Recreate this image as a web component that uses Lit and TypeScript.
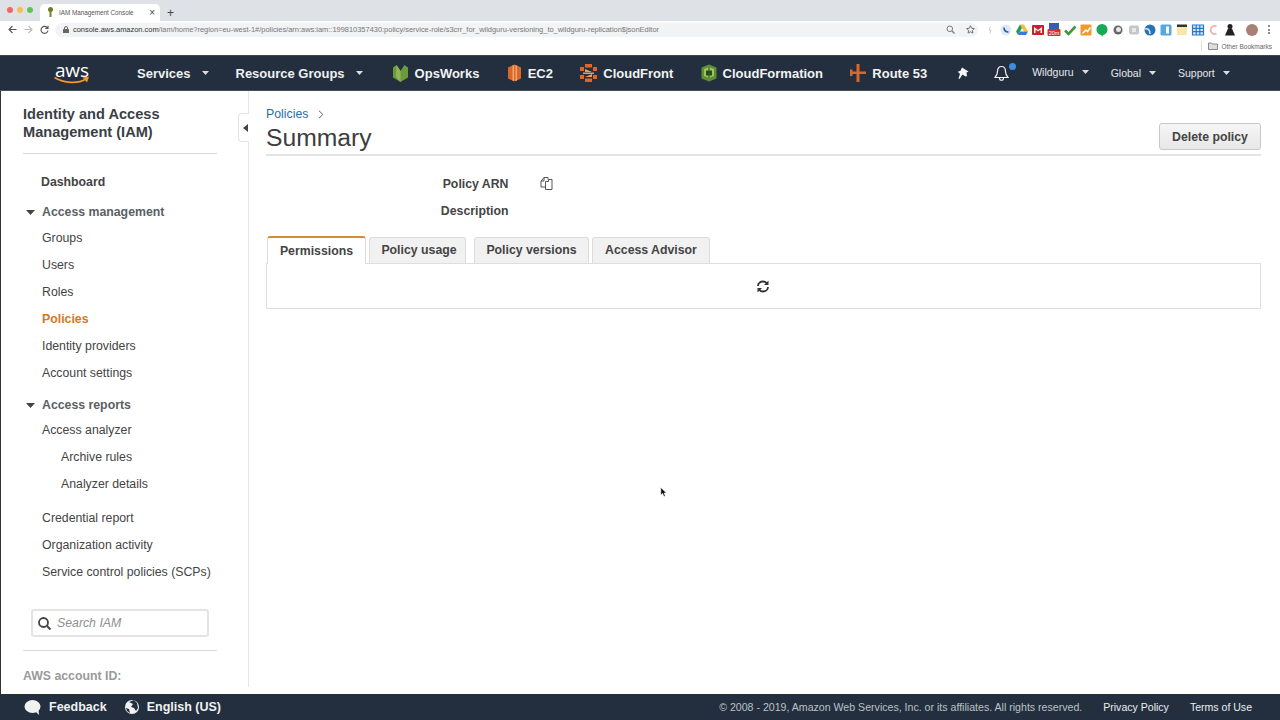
import { LitElement, html, css, svg } from "lit";
import { customElement } from "lit/decorators.js";

const caret = html`<svg class="caret" width="7" height="4" viewBox="0 0 8 5" preserveAspectRatio="none"><path d="M0 0h8L4 5z" fill="currentColor"/></svg>`;

const extIcons = [
  svg`<path d="M8.500 4.500L7 8h2l-1 3.500" stroke="#c9ccd0" fill="none"/>`,
  svg`<circle cx="8" cy="8" r="5.500" fill="#dfe9f5"/><path d="M6 5.500c0 3 1.500 4.500 4.500 4.500" stroke="#2a5aa8" stroke-width="1.600" fill="none"/>`,
  svg`<path d="M6 2.500h4l4 7H10z" fill="#f5bf2f"/><path d="M6 2.500L2 9.500l2 3.500 4-7z" fill="#1f9d57"/><path d="M4 13h8l2-3.500H6z" fill="#3b78e7"/>`,
  svg`<rect x="2" y="3" width="12" height="10" rx="1" fill="#c8232c"/><path d="M4 5v6h1.500V7.500L8 9.500l2.500-2V11H12V5L8 8z" fill="#fff"/>`,
  svg`<rect x="3" y="1" width="10" height="6" fill="#3b5ea8"/><rect x="1.500" y="7" width="13" height="7" rx="1" fill="#d2332d"/><text x="8" y="12.500" font-size="5.500" font-family="Liberation Sans" text-anchor="middle" fill="#fff">20m</text>`,
  svg`<path d="M3 8.500l3.500 3.500L13.500 4.500" stroke="#3d9a3a" stroke-width="2.600" fill="none"/>`,
  svg`<rect x="2.500" y="2.500" width="11" height="11" rx="1" fill="#ef9a2d"/><path d="M4.500 11.500L8 8l1.500 1.500 3-4" stroke="#fff" stroke-width="1.500" fill="none"/>`,
  svg`<circle cx="8" cy="7.500" r="5.500" fill="#17a85a"/><path d="M7 12l1 3 1.500-3z" fill="#17a85a"/>`,
  svg`<circle cx="8" cy="8" r="4.500" fill="#666"/><circle cx="8.500" cy="7.500" r="2.500" fill="#e6e6e6"/>`,
  svg`<rect x="3" y="3.500" width="10" height="9" rx="2" fill="#c4c6c8"/><rect x="6" y="6" width="4" height="4" fill="#e6e7e8"/>`,
  svg`<circle cx="8" cy="8" r="5.500" fill="#2673b8"/><path d="M3 7c3-1 5 1 5 5" stroke="#d4e4f2" stroke-width="1.500" fill="none"/>`,
  svg`<rect x="2.500" y="2.500" width="11" height="11" rx="1.500" fill="#55a9de"/><rect x="8" y="4.500" width="3" height="7" fill="#fff"/>`,
  svg`<rect x="3" y="5" width="10" height="8" fill="#f8e7a8"/><rect x="3" y="2.500" width="10" height="2.500" fill="#333"/>`,
  svg`<path d="M2.500 3h11v10h-11zM2.500 6.300h11M2.500 9.700h11M6.200 3v10M9.800 3v10" stroke="#2678d0" stroke-width="1.200" fill="#d5e6f7"/>`,
  svg`<path d="M10.500 4.500a4 4 0 1 0 0 7" stroke="#eeb0ae" stroke-width="1.800" fill="none"/>`,
  svg`<circle cx="8" cy="4.500" r="2.500" fill="#222"/><path d="M3 13.500l3-7h4l3 7z" fill="#222"/>`,
];

const services = [
  { name: "OpsWorks", w: 17, icon: svg`<path d="M4.500 1L8.500 7l4-6 3.500 2.500v10L8.500 18 1 13.500v-10z" fill="#6c9a3a"/><path d="M4.500 1L8.500 7v11L4 13z" fill="#8fb558"/>` },
  { name: "EC2", w: 15, icon: svg`<path d="M1 3.500L7.500 .5l6.500 3v11l-6.500 3-6.500-3z" fill="#d9692a"/><path d="M5.500 1.300h1.500v15.400H5.500zM8.500 1.200H10v15.600H8.500z" fill="#f3a46b"/>` },
  { name: "CloudFront", w: 17, icon: svg`<path d="M5 0h7v3.500H5zM0 3h4v4H0zM13 3h4v4h-4zM0 11h4v4H0zM13 11h4v4h-4zM5 14.500h7V18H5z" fill="#d9692a"/><path d="M3 8.500h11v1.500H3zM5 5l7 3H5zM5 13l7-3v3z" fill="#f09a5b"/>` },
  { name: "CloudFormation", w: 16, icon: svg`<path d="M8 .5l7.500 3v11L8 17.500.5 14.500v-11z" fill="#5e8e32"/><path d="M3 5l4-1.500v10L3 12zM13 5L9 3.500v10l4-1.500z" fill="#9cc568"/><path d="M5 6.500h6v5H5z" fill="#2d4a1a"/>` },
  { name: "Route 53", w: 16, icon: svg`<path d="M6.500 0h3v18h-3zM0 5.500h2.500v2h4v2.500h-4v2H0zM9.500 7.500H16V10H9.500z" fill="#d9692a"/>` },
];

@customElement("app-root")
export class AppRoot extends LitElement {
  static styles = css`
    :host { display: block; width: 1280px; height: 720px; position: relative; overflow: hidden; background: #fff;
      font-family: "Liberation Sans", Arial, sans-serif; color: #444; }
    * { box-sizing: border-box; }
    svg { display: block; flex: none; }
    .page { display: flex; flex-direction: column; height: 720px; }

    .tabstrip { height: 21px; background: #dee1e6; display: flex; align-items: flex-end; padding-left: 7px; flex: none; }
    .lights { display: flex; gap: 4px; align-self: center; margin-right: 6px; margin-top: -1px; }
    .lights i { width: 6px; height: 6px; border-radius: 50%; display: block; }
    .r { background: #ed6a5e; } .y { background: #f5bf4f; } .g { background: #61c554; }
    .tab { width: 120px; height: 17px; background: #fff; border-radius: 5px 5px 0 0; display: flex; align-items: center;
      padding: 0 5px 1px 7px; font-size: 6.300px; color: #555; gap: 5px; margin-left: 1px; }
    .tab span { flex: 1; }
    .tab b { font-weight: 400; font-size: 10px; color: #444; }
    .plus { font-size: 12px; color: #444; margin-left: 7px; align-self: center; line-height: 1; margin-top: 4px; }

    .toolbar { height: 17px; background: #fff; display: flex; align-items: center; padding: 0 3px 0 4px; flex: none; color: #666; }
    .navbtn { width: 16px; display: flex; justify-content: center; }
    .url { width: 923px; height: 14px; border-radius: 7px; background: #f1f3f4; margin-left: 3px; display: flex; align-items: center;
      padding: 0 3px 0 8px; font-size: 7.450px; color: #777; white-space: nowrap; gap: 4px; }
    .url span { flex: 1; }
    .url b { color: #333; font-weight: 400; }
    .star { margin-left: 7px; }
    .exts { display: flex; margin-left: 4px; align-items: center; }
    .exts div { width: 16px; height: 16px; }
    .avatar { width: 12px; height: 12px; border-radius: 50%; background: #a98076; margin-left: 8px; margin-right: 10px; }
    .dots { display: flex; flex-direction: column; gap: 1.500px; }
    .dots i { width: 2px; height: 2px; border-radius: 50%; background: #666; display: block; }

    .bookmarks { height: 17px; background: #fff; display: flex; justify-content: flex-end; align-items: center; padding: 0 8px 1px 0; font-size: 6.500px; color: #666; gap: 3px; flex: none; }
    .sep { width: 1px; height: 10px; background: #dcdcdc; margin-right: 3px; }

    .nav { height: 36px; background: #232f3e; border-top: 1px solid #3c4652; border-bottom: 1px solid #444f5c; display: flex; align-items: center; padding-left: 54px; color: #fff; flex: none; }
    .logo { width: 83px; flex: none; display: flex; justify-content: flex-start; }
    .logotext { position: relative; width: 36px; height: 25px; }
    .logotext span { position: absolute; left: 1px; top: -4px; font-size: 19px; letter-spacing: -.2px; font-family: "Open Sans", sans-serif; font-weight: 400; }
    .logotext svg { position: absolute; left: 0; top: 15px; }
    .navitem { font-size: 13px; font-weight: 700; display: flex; align-items: center; color: #eef0f2; white-space: nowrap; }
    .navitem .caret { margin-left: 11px; color: #ddd; }
    .svc1 { margin-right: 27px; }
    .svc2 { margin-right: 29px; }
    .svcs { display: flex; gap: 27.300px; align-items: center; }
    .svc { display: flex; align-items: center; gap: 6px; font-size: 13px; font-weight: 700; color: #f2f3f4; white-space: nowrap; }
    .pin { margin-left: 30px; }
    .bell { margin-left: 25px; position: relative; }
    .bell i { position: absolute; left: 15px; top: -2px; width: 7px; height: 7px; border-radius: 50%; background: #3b8fe0; display: block; }
    .acct { font-size: 10.500px; font-weight: 400; color: #e6e8ea; margin-left: 22px; }
    .acct .caret { margin-left: 8px; }
    .a1 { margin-bottom: 2px; margin-left: 23px; }

    .body { flex: 1; display: flex; min-height: 0; border-left: 1px solid #333; }
    .side { width: 248px; flex: none; border-right: 1px solid #e6e6e6; padding: 14px 31px 0 22px; overflow: hidden; margin-bottom: 7px; }
    .side h1 { margin: 0; font-size: 14.600px; line-height: 18px; font-weight: 700; color: #3a3f45; padding-bottom: 12px; border-bottom: 1px solid #d8d8d8; }
    .dash { font-size: 12.300px; font-weight: 700; color: #444; margin: 19.500px 0 0 18px; line-height: 16px; }
    .grp { display: flex; align-items: center; font-size: 12.300px; font-weight: 700; color: #5a5f65; line-height: 16px; margin-top: 14.500px; height: 16px; }
    .grp .caret { margin: 1px 7px 0 3px; color: #444; width: 9px; height: 5px; }
    .grp.second { margin-top: 11px; }
    .items { margin-top: 4px; }
    .item { height: 27px; display: flex; align-items: center; padding-left: 19px; font-size: 12.300px; color: #444; white-space: nowrap; }
    .item.on { color: #d9771e; font-weight: 700; }
    .item.sub { padding-left: 38px; }
    .item.gap { margin-top: 7px; }
    .items.tight { margin-top: 3px; }
    .search { height: 28px; width: 178px; margin: 24px 0 0 8px; border: 2px solid #e3e3e3; border-radius: 3px; display: flex; align-items: center; padding-left: 4px; gap: 5px; font-size: 12.300px; font-style: italic; color: #8f8f8f; }
    .siderule { border-top: 1px solid #dcdcdc; margin-top: 13px; }
    .acctid { font-size: 12.300px; font-weight: 700; color: #9a9a9a; margin-top: 18px; }

    .main { flex: 1; min-width: 0; padding: 15px 19px 0 17px; position: relative; }
    .collapse { position: absolute; left: -11px; top: 22px; width: 11px; height: 29px; background: #fff; border: 1px solid #e3e3e3; border-right: none; border-radius: 4px 0 0 4px; display: flex; align-items: center; justify-content: center; padding-left: 3px; }
    .crumb { display: flex; align-items: center; gap: 10px; font-size: 12.300px; color: #1f6fa8; line-height: 16px; }
    .head { display: flex; justify-content: space-between; align-items: flex-start; height: 34px; border-bottom: 2px solid #e3e3e3; }
    .head h2 { margin: 1px 0 0; font-size: 24.700px; font-weight: 400; color: #3d3d3d; line-height: 30px; }
    .btn { width: 102px; height: 27px; margin-top: 1px; border: 1px solid #c9c9c9; border-radius: 3px; background: linear-gradient(#f6f6f6,#e7e7e7); font-size: 12.300px; font-weight: 700; color: #444; display: flex; align-items: center; justify-content: center; }
    .meta { margin-top: 19.500px; display: grid; grid-template-columns: 242.500px auto; column-gap: 30.500px; row-gap: 11px; font-size: 12.300px; font-weight: 700; color: #444; line-height: 16px; justify-content: start; }
    .meta label { text-align: right; }
    .tabs { margin-top: 17.500px; display: flex; align-items: flex-end; height: 27px; padding-left: 1px; position: relative; z-index: 1; }
    .t { height: 26px; padding-bottom: 1px; background: #f1f1f1; border: 1px solid #dcdcdc; border-bottom: none; border-radius: 3px 3px 0 0; display: flex; align-items: center; justify-content: center; font-size: 12.300px; font-weight: 700; color: #444; }
    .t.on { background: #fff; border: 1px solid #dcdcdc; border-top: 2px solid #d98a35; border-bottom: none; margin-bottom: -1px; height: 28px; }
    .t1 { width: 99px; margin-right: 3px; }
    .t2 { width: 97px; margin-right: 8px; padding-left: 3px; }
    .t3 { width: 115px; margin-right: 3px; }
    .t4 { width: 118px; }
    .panel { height: 46px; border: 1px solid #dedede; display: flex; align-items: center; justify-content: center; padding-right: 2px; }
    .cursor { position: absolute; left: 660px; top: 487px; }

    .foot { height: 26px; background: #232f3e; display: flex; align-items: center; padding: 0 28px 0 24px; color: #f0f1f2; font-size: 12.500px; flex: none; white-space: nowrap; }
    .fb { font-weight: 700; display: flex; align-items: center; }
    .fb svg { margin-right: 8px; }
    .fb.lang { margin-left: 18px; }
    .copy { margin-left: auto; font-size: 10.600px; color: #bcc1c7; }
    .link { font-size: 10.550px; margin-left: 21px; color: #eceef0; }
  `;

  render() {
    return html`<div class="page">
      <div class="tabstrip">
        <div class="lights"><i class="r"></i><i class="y"></i><i class="g"></i></div>
        <div class="tab">
          <svg width="7" height="10" viewBox="0 0 7 10"><circle cx="3.500" cy="2.500" r="2.500" fill="#6b7d2a"/><rect x="2.500" y="4" width="2" height="6" fill="#8a7a2a"/></svg>
          <span>IAM Management Console</span><b>×</b>
        </div>
        <div class="plus">+</div>
      </div>
      <div class="toolbar">
        <div class="navbtn"><svg width="9" height="9" viewBox="0 0 9 9"><path d="M8.500 4.500H1M4.500 1L1 4.500 4.500 8" stroke="#555" stroke-width="1.100" fill="none"/></svg></div>
        <div class="navbtn"><svg width="9" height="9" viewBox="0 0 9 9"><path d="M.5 4.500H8M4.500 1L8 4.500 4.500 8" stroke="#bbb" stroke-width="1.100" fill="none"/></svg></div>
        <div class="navbtn"><svg width="9" height="9" viewBox="0 0 9 9"><path d="M7.500 3A3.500 3.500 0 1 0 8 5.500M8 .8v2.700H5.300" stroke="#555" stroke-width="1.100" fill="none"/></svg></div>
        <div class="url">
          <svg width="6" height="7" viewBox="0 0 6 7"><rect y="3" width="6" height="4" rx=".5" fill="#666"/><path d="M1.500 3V2a1.500 1.500 0 0 1 3 0v1" stroke="#666" fill="none"/></svg>
          <span><b>console.aws.amazon.com</b>/iam/home?region=eu-west-1#/policies/arn:aws:iam::199810357430:policy/service-role/s3crr_for_wildguru-versioning_to_wildguru-replication$jsonEditor</span>
          <svg width="9" height="9" viewBox="0 0 9 9"><circle cx="3.800" cy="3.800" r="2.800" stroke="#777" fill="none"/><path d="M6 6l2.500 2.500" stroke="#777" stroke-width="1.200"/></svg>
          <svg class="star" width="9" height="9" viewBox="0 0 10 10"><path d="M5 .8l1.300 2.800 3 .4-2.200 2 .6 3L5 7.500 2.300 9l.6-3L.7 4l3-.4z" stroke="#666" fill="none"/></svg>
        </div>
        <div class="exts">${extIcons.map((i) => html`<div><svg width="16" height="16" viewBox="0 0 16 16">${i}</svg></div>`)}</div>
        <div class="avatar"></div>
        <div class="dots"><i></i><i></i><i></i></div>
      </div>
      <div class="bookmarks">
        <div class="sep"></div>
        <svg width="10" height="8" viewBox="0 0 10 8"><path d="M.5 1h3l1 1h5v5.500h-9z" stroke="#888" fill="#ddd"/></svg>
        Other Bookmarks
      </div>

      <div class="nav">
        <div class="logo"><div class="logotext"><span>aws</span>
          <svg width="36" height="9" viewBox="0 0 36 9"><path d="M.5 1.500C10 7.500 24 8 32 3" stroke="#f0962c" stroke-width="1.700" fill="none"/><path d="M28.500 1.500L35 .8l-2 5.700z" fill="#f0962c"/></svg>
        </div></div>
        <div class="navitem svc1">Services${caret}</div>
        <div class="navitem svc2">Resource Groups${caret}</div>
        <div class="svcs">
          ${services.map((s) => html`<div class="svc"><svg width=${s.w} height="18" viewBox="0 0 ${s.w} 18">${s.icon}</svg>${s.name}</div>`)}
        </div>
        <svg class="pin" width="12" height="13" viewBox="0 0 12 13"><path d="M5 .5l6.500 4-2 1 .5 3.500-1.500.5-3-2L2.500 12l-1-.5L3 7 .8 4.800 3.500 3.800z" fill="#f4f5f6"/></svg>
        <div class="bell">
          <svg width="15" height="16" viewBox="0 0 15 16"><path d="M7.500 1.500c-3 0-4 2.500-4 5 0 3-1.200 4.500-2.500 6h13c-1.300-1.500-2.500-3-2.500-6 0-2.500-1-5-4-5zM5.500 13c0 3 4 3 4 0" stroke="#f0f1f2" stroke-width="1.200" fill="none"/></svg>
          <i></i>
        </div>
        <div class="navitem acct a1">Wildguru${caret}</div>
        <div class="navitem acct">Global${caret}</div>
        <div class="navitem acct">Support${caret}</div>
      </div>

      <div class="body">
        <aside class="side">
          <h1>Identity and Access Management (IAM)</h1>
          <div class="dash">Dashboard</div>
          <div class="grp">${caret}Access management</div>
          <div class="items">
            <div class="item">Groups</div>
            <div class="item">Users</div>
            <div class="item">Roles</div>
            <div class="item on">Policies</div>
            <div class="item">Identity providers</div>
            <div class="item">Account settings</div>
          </div>
          <div class="grp second">${caret}Access reports</div>
          <div class="items tight">
            <div class="item">Access analyzer</div>
            <div class="item sub">Archive rules</div>
            <div class="item sub">Analyzer details</div>
            <div class="item gap">Credential report</div>
            <div class="item">Organization activity</div>
            <div class="item">Service control policies (SCPs)</div>
          </div>
          <div class="search">
            <svg width="15" height="15" viewBox="0 0 15 15"><circle cx="6.500" cy="6.500" r="4.500" stroke="#444" stroke-width="1.800" fill="none"/><path d="M10 10l3.500 3.500" stroke="#444" stroke-width="2"/></svg>
            Search IAM
          </div>
          <div class="siderule"></div>
          <div class="acctid">AWS account ID:</div>
        </aside>

        <main class="main">
          <div class="collapse"><svg width="5" height="8" viewBox="0 0 5 8"><path d="M5 0v8L0 4z" fill="#444"/></svg></div>
          <div class="crumb">Policies
            <svg width="6" height="9" viewBox="0 0 6 9"><path d="M1 .8L4.800 4.500 1 8.200" stroke="#666" fill="none"/></svg>
          </div>
          <div class="head">
            <h2>Summary</h2>
            <div class="btn">Delete policy</div>
          </div>
          <div class="meta">
            <label>Policy ARN</label>
            <svg width="15" height="15" viewBox="0 0 15 15"><path d="M6.500 5.500h3V3.500l3.500 0v10H6.500zM6.500 11H2V5l3-3.500h4v2" stroke="#555" fill="#fff"/><path d="M5 1.500V5H2" stroke="#555" fill="none"/></svg>
            <label>Description</label><span></span>
          </div>
          <div class="tabs">
            <div class="t on t1">Permissions</div>
            <div class="t t2">Policy usage</div>
            <div class="t t3">Policy versions</div>
            <div class="t t4">Access Advisor</div>
          </div>
          <div class="panel">
            <svg width="14" height="13" viewBox="0 0 14 13"><path d="M2 6C2 3 4.500 1.500 7 1.500c1.500 0 2.800.6 3.700 1.600M12 7c0 3-2.500 4.500-5 4.500-1.500 0-2.800-.6-3.700-1.600" stroke="#333" stroke-width="1.800" fill="none"/><path d="M12.500 .5v4.500H8zM1.500 12.500V8H6z" fill="#333"/></svg>
          </div>
        </main>
      </div>

      <div class="foot">
        <div class="fb"><svg width="17" height="15" viewBox="0 0 17 15"><ellipse cx="8.500" cy="6.500" rx="8" ry="6.500" fill="#f2f2f2"/><path d="M11 11l4 4-.5-6z" fill="#f2f2f2"/></svg>Feedback</div>
        <div class="fb lang"><svg width="14" height="14" viewBox="0 0 14 14"><circle cx="7" cy="7" r="7" fill="#f2f2f2"/><path d="M4 2l4 2-2 3 3 1 2 3 2-3-1-5-3-3zM1 8l3 1 1 4-3-2z" fill="#232f3e"/></svg>English (US)</div>
        <div class="copy">© 2008 - 2019, Amazon Web Services, Inc. or its affiliates. All rights reserved.</div>
        <div class="link">Privacy Policy</div>
        <div class="link">Terms of Use</div>
      </div>
      <svg class="cursor" width="7" height="10" viewBox="0 0 7 10"><path d="M.8.5v7.500l1.800-1.600L4 9.500l1.300-.5-1.300-3h2.400z" fill="#111" stroke="#fff" stroke-width=".5"/></svg>
    </div>`;
  }
}
